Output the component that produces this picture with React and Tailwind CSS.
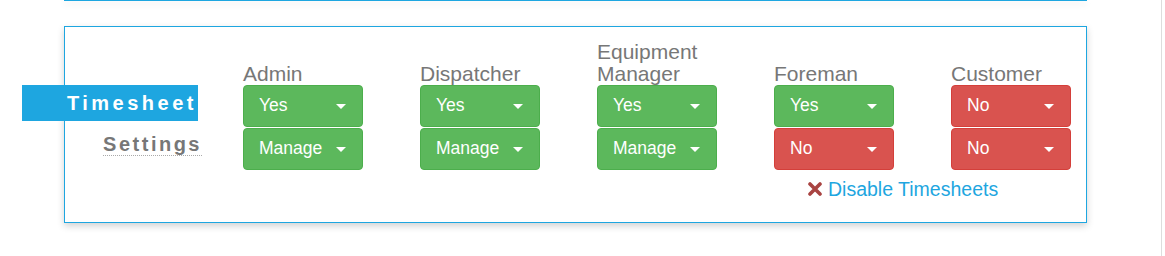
import React from 'react';

const roles = [
  { label: ['Admin'], access: 'yes', manage: 'Manage' },
  { label: ['Dispatcher'], access: 'yes', manage: 'Manage' },
  { label: ['Equipment', 'Manager'], access: 'yes', manage: 'Manage' },
  { label: ['Foreman'], access: 'yes', manage: 'No', link: true },
  { label: ['Customer'], access: 'no', manage: 'No' },
];

const Caret = () => (
  <span className="w-0 h-0 border-t-[5px] border-t-white border-x-[5px] border-x-transparent" />
);

const DropButton = ({ text, ok }) => (
  <button
    type="button"
    className={
      'flex items-center justify-between w-[120px] h-[42px] pl-[15px] pr-[16px] rounded-[4px] border text-white text-[17.5px] leading-none ' +
      (ok ? 'bg-[#5cb85c] border-[#4cae4c]' : 'bg-[#d9534f] border-[#d43f3a]')
    }
  >
    <span>{text}</span>
    <Caret />
  </button>
);

const App = () => {
  return (
    <div className="flex w-[1165px] h-[256px] bg-white overflow-hidden" style={{ fontFamily: '"Liberation Sans", Arial, sans-serif' }}>
      <div className="w-[1162px] shrink-0 border-r border-[#dddddd] pl-16">
        {/* bottom edge of the previous panel */}
        <div className="w-[1023px] h-px bg-[#1ea6e0] shadow-[0_3px_7px_rgba(0,0,0,0.18)]" />

        <div className="mt-[25px] w-[1023px] h-[197px] border border-[#1ea6e0] bg-white shadow-[0_3px_7px_rgba(0,0,0,0.18)]">
          <div className="flex pt-[14px] -ml-[43px]">
            {/* section title */}
            <div className="w-[221px] shrink-0 pt-[44px] flex flex-col">
              <div className="w-[176px] h-[36px] bg-[#1ea6e0] flex items-center justify-end pr-[1px]">
                <span className="text-white font-bold text-[20px] tracking-[3.5px] leading-none">Timesheet</span>
              </div>
              <div className="w-[180px] flex justify-end mt-[12px]">
                <span className="text-[#777777] font-bold text-[20px] tracking-[2.5px] leading-[22px] border-b border-dotted border-[#aaaaaa]">
                  Settings
                </span>
              </div>
            </div>

            {roles.map((r) => (
              <div key={r.label.join(' ')} className="w-[177px] shrink-0 flex flex-col">
                <div className="h-[44px] flex flex-col justify-end text-[#777777] text-[21px] leading-[22px]">
                  {r.label.map((l) => (
                    <span key={l}>{l}</span>
                  ))}
                </div>
                <div className="flex flex-col gap-px">
                  <DropButton text={r.access === 'yes' ? 'Yes' : 'No'} ok={r.access === 'yes'} />
                  <DropButton text={r.manage} ok={r.manage === 'Manage'} />
                </div>
                {r.link && (
                  <a href="#" className="mt-[8px] ml-[34px] flex items-center gap-[6px] whitespace-nowrap text-[#1ea6e0] text-[19.5px] leading-[22px]">
                    <svg width="14" height="14" viewBox="0 0 14 14" className="shrink-0">
                      <path d="M2 2 L12 12 M12 2 L2 12" stroke="#a94442" strokeWidth="3.6" strokeLinecap="round" />
                    </svg>
                    Disable Timesheets
                  </a>
                )}
              </div>
            ))}
          </div>
        </div>
      </div>
    </div>
  );
};

export default App;
